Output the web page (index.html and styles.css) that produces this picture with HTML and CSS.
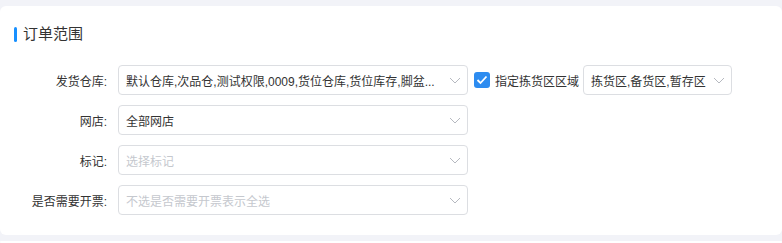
FILE: index.html
```html
<!DOCTYPE html>
<html lang="zh-CN">
<head>
    <meta charset="UTF-8">
    <title>订单范围</title>
    <link rel="stylesheet" href="styles.css">
</head>
<body>
    <div class="card">
        <h2 class="card-title">订单范围</h2>
        <div class="form">
            <div class="form-item">
                <label class="form-label">发货仓库:</label>
                <div class="select">
                    <span class="select-value">默认仓库,次品仓,测试权限,0009,货位仓库,货位库存,脚盆...</span>
                    <svg class="arrow" width="12" height="7" viewBox="0 0 12 7"><path d="M1 1l5 5 5-5" fill="none" stroke="#b6b9c0" stroke-width="1"/></svg>
                </div>
                <label class="check">
                    <span class="check-box">
                        <svg width="12" height="10" viewBox="0 0 12 10"><path d="M1.5 5l3 3 6-6.5" fill="none" stroke="#fff" stroke-width="1.8"/></svg>
                    </span>
                    指定拣货区区域
                </label>
                <div class="select select-small">
                    <span class="select-value">拣货区,备货区,暂存区</span>
                    <svg class="arrow" width="12" height="7" viewBox="0 0 12 7"><path d="M1 1l5 5 5-5" fill="none" stroke="#b6b9c0" stroke-width="1"/></svg>
                </div>
            </div>
            <div class="form-item">
                <label class="form-label">网店:</label>
                <div class="select">
                    <span class="select-value">全部网店</span>
                    <svg class="arrow" width="12" height="7" viewBox="0 0 12 7"><path d="M1 1l5 5 5-5" fill="none" stroke="#b6b9c0" stroke-width="1"/></svg>
                </div>
            </div>
            <div class="form-item">
                <label class="form-label">标记:</label>
                <div class="select">
                    <span class="select-value placeholder">选择标记</span>
                    <svg class="arrow" width="12" height="7" viewBox="0 0 12 7"><path d="M1 1l5 5 5-5" fill="none" stroke="#b6b9c0" stroke-width="1"/></svg>
                </div>
            </div>
            <div class="form-item">
                <label class="form-label">是否需要开票:</label>
                <div class="select">
                    <span class="select-value placeholder">不选是否需要开票表示全选</span>
                    <svg class="arrow" width="12" height="7" viewBox="0 0 12 7"><path d="M1 1l5 5 5-5" fill="none" stroke="#b6b9c0" stroke-width="1"/></svg>
                </div>
            </div>
        </div>
    </div>
    <div class="card card-next"></div>
</body>
</html>
```

FILE: styles.css
```css
body {
    margin: 0;
    padding-top: 6px;
    background-color: #f2f3f8;
    font-family: "Liberation Sans", "Noto Sans CJK SC", sans-serif;
    font-size: 12px;
    color: #333;
}
.card {
    background-color: #fff;
    border-radius: 6px;
    padding: 18px 14px 20px 14px;
}
.card-next {
    margin-top: 6px;
    height: 2px;
    padding: 0;
}
.card-title {
    margin: 0 0 21px 0;
    display: flex;
    align-items: center;
    font-size: 15px;
    font-weight: normal;
    line-height: 20px;
    color: #333;
}
.card-title::before {
    content: "";
    width: 3px;
    height: 15px;
    border-radius: 2px;
    background-color: #1890ff;
    margin-right: 6px;
}
.form {
    display: flex;
    flex-direction: column;
    gap: 10px;
}
.form-item {
    display: flex;
    align-items: center;
}
.form-label {
    width: 104px;
    padding-right: 11px;
    box-sizing: border-box;
    text-align: right;
}
.select {
    width: 350px;
    height: 30px;
    box-sizing: border-box;
    border: 1px solid #dcdee2;
    border-radius: 4px;
    padding: 0 6px 0 7px;
    display: flex;
    align-items: center;
    justify-content: space-between;
}
.select-small {
    width: 149px;
}
.select-value {
    white-space: nowrap;
    overflow: hidden;
}
.placeholder {
    color: #c5c8ce;
}
.arrow {
    flex-shrink: 0;
    margin-left: 4px;
}
.check {
    display: flex;
    align-items: center;
    margin: 0 4px 0 6px;
    font-size: 12px;
}
.check-box {
    width: 16px;
    height: 16px;
    border-radius: 3px;
    background-color: #2d8cf0;
    display: flex;
    align-items: center;
    justify-content: center;
    margin-right: 5px;
}
```
